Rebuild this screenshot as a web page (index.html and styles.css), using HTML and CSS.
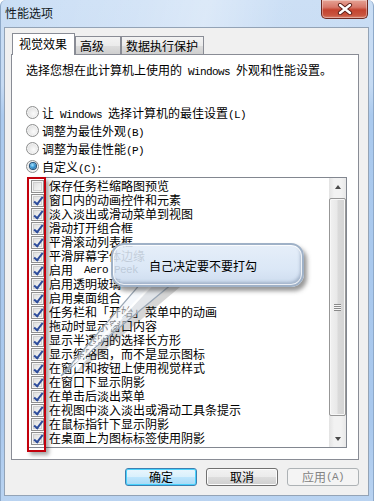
FILE: index.html
```html
<!DOCTYPE html>
<html lang="zh-CN">
<head>
<meta charset="utf-8">
<title>性能选项</title>
<link rel="stylesheet" href="styles.css">
</head>
<body>
<div class="window">
  <div class="titlebar">
    <span class="title">性能选项</span>
    <div class="close">
      <svg width="16" height="12" viewBox="0 0 16 12">
        <path d="M3 2 L13 10 M13 2 L3 10" stroke="#5a1e18" stroke-width="4.2" stroke-linecap="round"/>
        <path d="M3 2 L13 10 M13 2 L3 10" stroke="#ffffff" stroke-width="2.4" stroke-linecap="round"/>
      </svg>
    </div>
  </div>
  <div class="client">
    <div class="tabs">
      <div class="tab active">视觉效果</div>
      <div class="tab t2">高级</div>
      <div class="tab t3">数据执行保护</div>
    </div>
    <div class="panel">
      <p class="desc">选择您想在此计算机上使用的<span class="lat"> Windows </span>外观和性能设置。</p>
      <div class="radios">
        <div class="radio"><span class="rb"></span><span>让<span class="lat"> Windows </span>选择计算机的最佳设置<span class="lat">(L)</span></span></div>
        <div class="radio"><span class="rb"></span><span>调整为最佳外观<span class="lat">(B)</span></span></div>
        <div class="radio"><span class="rb"></span><span>调整为最佳性能<span class="lat">(P)</span></span></div>
        <div class="radio"><span class="rb on"></span><span>自定义<span class="lat">(C):</span></span></div>
      </div>
      <div class="listwrap">
        <div class="list">
          <div class="items">
            <div class="item"><span class="cb"></span>保存任务栏缩略图预览</div>
            <div class="item"><span class="cb on"></span>窗口内的动画控件和元素</div>
            <div class="item"><span class="cb on"></span>淡入淡出或滑动菜单到视图</div>
            <div class="item"><span class="cb on"></span>滑动打开组合框</div>
            <div class="item"><span class="cb on"></span>平滑滚动列表框</div>
            <div class="item"><span class="cb on"></span>平滑屏幕字体边缘</div>
            <div class="item"><span class="cb on"></span>启用<span class="lat"> Aero Peek</span></div>
            <div class="item"><span class="cb on"></span>启用透明玻璃</div>
            <div class="item"><span class="cb on"></span>启用桌面组合</div>
            <div class="item"><span class="cb on"></span>任务栏和「开始」菜单中的动画</div>
            <div class="item"><span class="cb on"></span>拖动时显示窗口内容</div>
            <div class="item"><span class="cb on"></span>显示半透明的选择长方形</div>
            <div class="item"><span class="cb on"></span>显示缩略图，而不是显示图标</div>
            <div class="item"><span class="cb on"></span>在窗口和按钮上使用视觉样式</div>
            <div class="item"><span class="cb on"></span>在窗口下显示阴影</div>
            <div class="item"><span class="cb on"></span>在单击后淡出菜单</div>
            <div class="item"><span class="cb on"></span>在视图中淡入淡出或滑动工具条提示</div>
            <div class="item"><span class="cb on"></span>在鼠标指针下显示阴影</div>
            <div class="item"><span class="cb on"></span>在桌面上为图标标签使用阴影</div>
          </div>
          <div class="scrollbar">
            <div class="sbtn"><span class="arrow up"></span></div>
            <div class="track">
              <div class="thumb"><span class="grip"></span></div>
            </div>
            <div class="sbtn"><span class="arrow down"></span></div>
          </div>
        </div>
        <div class="redmark"></div>
      </div>
    </div>
    <div class="buttons">
      <div class="btn default">确定</div>
      <div class="btn">取消</div>
      <div class="btn disabled">应用<span class="lat">(A)</span></div>
    </div>
  </div>

  <svg class="tail" width="374" height="501" viewBox="0 0 374 501">
    <polygon points="146,284 176,284 64,378" fill="rgba(70,70,70,0.22)" transform="translate(3,3)"/>
    <polygon points="140,283 172,283 60,376" fill="rgba(236,242,250,0.55)" stroke="#9aa7b6" stroke-width="1.2"/>
    <polyline points="150,286 72,368" fill="none" stroke="rgba(255,255,255,0.9)" stroke-width="2"/>
  </svg>
  <div class="callout">自己决定要不要打勾</div>
</div>
</body>
</html>
```

FILE: styles.css
```css
* { box-sizing: border-box; }
html, body { margin: 0; padding: 0; }
body {
  width: 374px;
  height: 501px;
  overflow: hidden;
  background: #ffffff;
  font-family: "Noto Sans CJK SC", "Liberation Sans", sans-serif;
  font-size: 12px;
  color: #000;
}
.lat {
  font-family: "Liberation Mono", "DejaVu Sans Mono", monospace;
  font-size: 11px;
  letter-spacing: -0.6px;
  white-space: pre;
}
.window {
  position: relative;
  width: 374px;
  height: 501px;
  display: flex;
  flex-direction: column;
  border-radius: 6px 6px 0 0;
  background: linear-gradient(to bottom, #cadef5 0px, #c6dbf3 85px, #abcaee 115px, #a9c8ed 420px, #b9d3f1 100%);
  border-left: 1px solid #8ea9c9;
  border-right: 1px solid #8ea9c9;
}
.titlebar {
  height: 27px;
  display: flex;
  justify-content: space-between;
  align-items: flex-start;
  background: linear-gradient(100deg, rgba(255,255,255,0) 0%, rgba(255,255,255,0.18) 35%, rgba(255,255,255,0.35) 55%, rgba(255,255,255,0.05) 75%, rgba(255,255,255,0) 100%);
}
.title {
  padding: 5px 0 0 4px;
  line-height: 16px;
  color: #101820;
}
.close {
  width: 47px;
  height: 19px;
  margin-right: 5px;
  display: flex;
  align-items: center;
  justify-content: center;
  border: 1px solid #6e2a22;
  border-top: none;
  border-radius: 0 0 5px 5px;
  background: linear-gradient(to bottom, #e6a395 0%, #d7786a 40%, #c4432f 55%, #c9553f 85%, #d9836f 100%);
  box-shadow: inset 0 0 0 1px rgba(255,255,255,0.35);
}
.client {
  height: 469px;
  margin: 0 4px 0 3px;
  border: 1px solid #93a3b6;
  background: #f0f0f0;
  padding: 5px 9px 0 6px;
  display: flex;
  flex-direction: column;
}
.tabs {
  display: flex;
  align-items: flex-end;
  height: 21px;
  position: relative;
  z-index: 2;
}
.tab {
  height: 18px;
  border: 1px solid #898c95;
  border-bottom: none;
  background: linear-gradient(to bottom, #f3f3f3 0%, #ebebeb 50%, #dddddd 51%, #cfcfcf 100%);
  line-height: 17px;
  white-space: nowrap;
}
.tab.active {
  height: 22px;
  margin-bottom: -1px;
  margin-left: 1px;
  width: 63px;
  padding-left: 6px;
  background: #ffffff;
  line-height: 19px;
}
.tab.t2 { width: 46px; padding-left: 4px; margin-left: 0; }
.tab.t3 { width: 83px; padding-left: 4px; }
.panel {
  height: 406px;
  border: 1px solid #898c95;
  background: #ffffff;
  padding: 8px 11px 0 14px;
  display: flex;
  flex-direction: column;
}
.desc {
  margin: 0;
  line-height: 14px;
  white-space: nowrap;
}
.radios {
  margin-top: 24px;
  display: flex;
  flex-direction: column;
}
.radio {
  height: 18px;
  display: flex;
  align-items: center;
  gap: 3px;
  white-space: nowrap;
}
.rb {
  width: 13px;
  height: 13px;
  border-radius: 50%;
  border: 1px solid #8e8f8f;
  background: radial-gradient(circle at 60% 60%, #fbfbfb 0%, #e6e6e6 55%, #c9c9c9 100%);
  box-shadow: inset 0 0 0 1px #f4f4f4;
  position: relative;
  flex: none;
}
.rb.on::after {
  content: "";
  position: absolute;
  left: 2.5px;
  top: 2.5px;
  width: 6px;
  height: 6px;
  border-radius: 50%;
  background: radial-gradient(circle at 40% 35%, #a9e4ff 0%, #3d9bd6 45%, #114f86 100%);
  box-shadow: 0 0 0 1px #1f4f78;
}
.listwrap {
  position: relative;
  margin-top: 2px;
  margin-left: 2px;
}
.list {
  height: 271px;
  border: 1px solid #828790;
  display: flex;
  background: #fff;
}
.items {
  flex: 1;
  padding: 1px 0 0 2px;
  display: flex;
  flex-direction: column;
  overflow: hidden;
}
.item {
  height: 14px;
  display: flex;
  align-items: center;
  gap: 5px;
  white-space: nowrap;
  line-height: 14px;
}
.cb {
  width: 13px;
  height: 13px;
  flex: none;
  border: 1px solid #8f8f8f;
  background: linear-gradient(135deg, #d6d6d6 0%, #ececec 50%, #fafafa 100%);
  box-shadow: inset 0 0 0 1px #f6f6f6, inset 0 0 0 2px #cfcfcf;
  position: relative;
}
.cb.on::after {
  content: "";
  position: absolute;
  left: 3.5px;
  top: 0.5px;
  width: 3px;
  height: 8px;
  border-right: 2px solid #2e4d9c;
  border-bottom: 2px solid #2e4d9c;
  transform: rotate(38deg);
}
.scrollbar {
  width: 17px;
  display: flex;
  flex-direction: column;
  background: linear-gradient(to right, #e3e3e3, #f2f2f2 30%, #f2f2f2 70%, #e8e8e8);
}
.sbtn {
  height: 17px;
  display: flex;
  align-items: center;
  justify-content: center;
  flex: none;
}
.arrow {
  width: 0;
  height: 0;
  border-left: 3.5px solid transparent;
  border-right: 3.5px solid transparent;
}
.arrow.up { border-bottom: 4px solid #4a4a4a; }
.arrow.down { border-top: 4px solid #4a4a4a; }
.track {
  flex: 1;
  padding: 3px 0 0 0;
}
.thumb {
  height: 218px;
  border: 1px solid #979797;
  border-radius: 2px;
  background: linear-gradient(to right, #f1f1f1 0%, #e9e9e9 45%, #dadada 55%, #d4d4d4 100%);
  box-shadow: inset 0 0 0 1px #f7f7f7;
  display: flex;
  align-items: center;
  justify-content: center;
}
.grip {
  width: 7px;
  height: 7px;
  background: repeating-linear-gradient(to bottom, #8a8a8a 0px, #8a8a8a 1px, #f6f6f6 1px, #f6f6f6 2px);
}
.redmark {
  position: absolute;
  left: -1px;
  top: 0;
  width: 19px;
  height: 275px;
  border: 2px solid #c3000c;
  box-shadow: 3px 3px 4px rgba(0,0,0,0.35);
  pointer-events: none;
}
.buttons {
  margin-top: 8px;
  display: flex;
  justify-content: flex-end;
  gap: 9px;
}
.btn {
  width: 72px;
  height: 18px;
  border: 1px solid #707070;
  border-radius: 3px;
  background: linear-gradient(to bottom, #f2f2f2 0%, #ebebeb 50%, #dddddd 51%, #cfcfcf 100%);
  box-shadow: inset 0 0 0 1px #fcfcfc;
  display: flex;
  align-items: center;
  justify-content: center;
  line-height: 16px;
}
.btn.default {
  border-color: #3c7fb1;
  box-shadow: inset 0 0 0 1px #48d2fd;
  background: linear-gradient(to bottom, #eaf6fd 0%, #d9f0fc 50%, #bee6fd 51%, #a7d9f5 100%);
}
.btn.disabled {
  border-color: #adb2b5;
  background: #f4f4f4;
  box-shadow: none;
  color: #838383;
}
.tail {
  position: absolute;
  left: 0;
  top: 0;
  pointer-events: none;
}
.callout {
  position: absolute;
  left: 110px;
  top: 243px;
  width: 193px;
  height: 44px;
  border-radius: 13px;
  border: 2px solid #9fb1c7;
  background: linear-gradient(to bottom, rgba(226,236,248,0.88) 0%, rgba(214,228,245,0.88) 60%, rgba(200,216,236,0.9) 100%);
  box-shadow: inset 0 0 0 1px rgba(255,255,255,0.8), inset -2px -3px 3px rgba(110,130,160,0.45), 3px 4px 4px rgba(50,50,50,0.5);
  padding-left: 36px;
  display: flex;
  align-items: center;
  white-space: nowrap;
}
```
